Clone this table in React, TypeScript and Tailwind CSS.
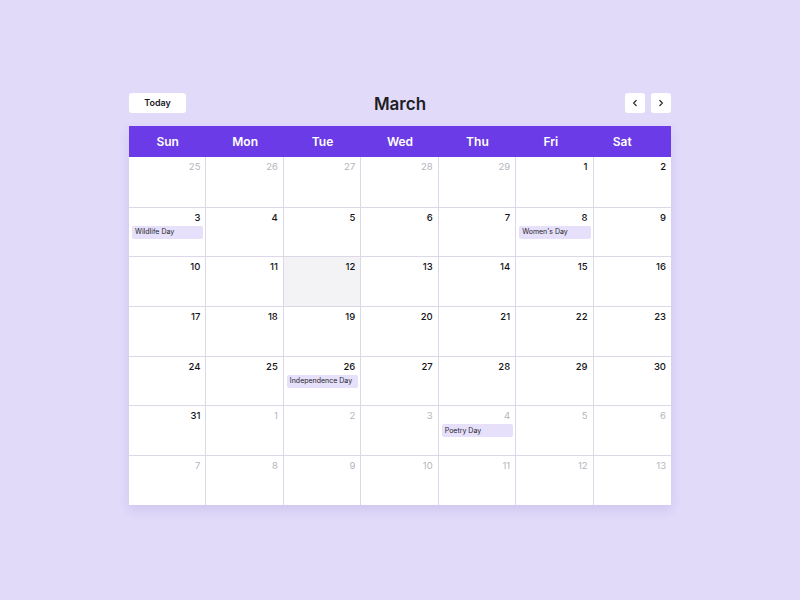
import React from "react";

const days = ["Sun", "Mon", "Tue", "Wed", "Thu", "Fri", "Sat"];
// header labels sit slightly left on the last two columns
const headPad = ["", "", "", "", "", "pr-[8px]", "pr-[20px]"];

type Cell = { n: number; muted?: boolean };

const buildCells = (): Cell[] => {
  const cells: Cell[] = [];
  [25, 26, 27, 28, 29].forEach((n) => cells.push({ n, muted: true }));
  for (let d = 1; d <= 31; d++) cells.push({ n: d });
  for (let d = 1; d <= 13; d++) cells.push({ n: d, muted: true });
  return cells;
};

const events: Record<number, string> = {
  7: "Wildlife Day",
  12: "Women's Day",
  30: "Independence Day",
  39: "Poetry Day",
};

export default function App() {
  const cells = buildCells();

  return (
    <div className="w-[800px] h-[600px] bg-[#e1daf9] flex flex-col items-center pt-[93px] font-['Inter',_'Liberation_Sans',_sans-serif]">
      <div className="w-[542px]">
        {/* Toolbar */}
        <div className="grid grid-cols-3 h-5 mb-[13px]">
          <div className="flex h-5">
            <button className="w-[57px] h-5 bg-white rounded-[3px] text-[9px] leading-5 font-semibold text-[#1b1b1f]">
              Today
            </button>
          </div>
          <h1 className="h-5 text-center text-[17px] leading-[22px] font-semibold text-[#1e1e24]">March</h1>
          <div className="flex h-5 gap-[6px] justify-end">
            <button className="w-5 h-5 bg-white rounded-[3px] flex items-center justify-center">
              <svg width="8" height="8" viewBox="0 0 8 8" fill="none" stroke="#2a2a30" strokeWidth="1.3" strokeLinecap="round" strokeLinejoin="round">
                <path d="M5.2 1.4 2.7 4l2.5 2.6" />
              </svg>
            </button>
            <button className="w-5 h-5 bg-white rounded-[3px] flex items-center justify-center">
              <svg width="8" height="8" viewBox="0 0 8 8" fill="none" stroke="#2a2a30" strokeWidth="1.3" strokeLinecap="round" strokeLinejoin="round">
                <path d="M2.8 1.4 5.3 4 2.8 6.6" />
              </svg>
            </button>
          </div>
        </div>

        {/* Calendar */}
        <div className="bg-white shadow-[0_5px_10px_rgba(90,60,180,0.12)]">
          <div className="grid grid-cols-7 bg-[#6a3be6] h-[31px]">
            {days.map((d, i) => (
              <div key={d} className={`flex items-center justify-center text-white text-[12px] font-semibold ${headPad[i]}`}>
                {d}
              </div>
            ))}
          </div>
          <div className="grid grid-cols-7">
            {cells.map((c, i) => {
              const isToday = !c.muted && c.n === 12;
              const event = events[i];
              return (
                <div
                  key={i}
                  className={`h-[49.7px] border-[#dcd8e8] ${i % 7 !== 6 ? "border-r" : ""} ${i >= 7 ? "border-t" : ""} ${isToday ? "bg-[#f3f3f6]" : "bg-white"} pl-[3px] pr-[2px] pt-[4px] flex flex-col`}
                >
                  <div className={`text-right pr-[3px] text-[9.5px] leading-[12px] ${c.muted ? "text-[#b4b4be]" : "text-[#141418] font-medium"}`}>
                    {c.n}
                  </div>
                  {event && (
                    <div className="mt-[2px] h-[13px] rounded-[2px] bg-[#e6e0fb] text-[7px] text-[#1e1e28] px-[3px] flex items-center">
                      {event}
                    </div>
                  )}
                </div>
              );
            })}
          </div>
        </div>
      </div>
    </div>
  );
}
